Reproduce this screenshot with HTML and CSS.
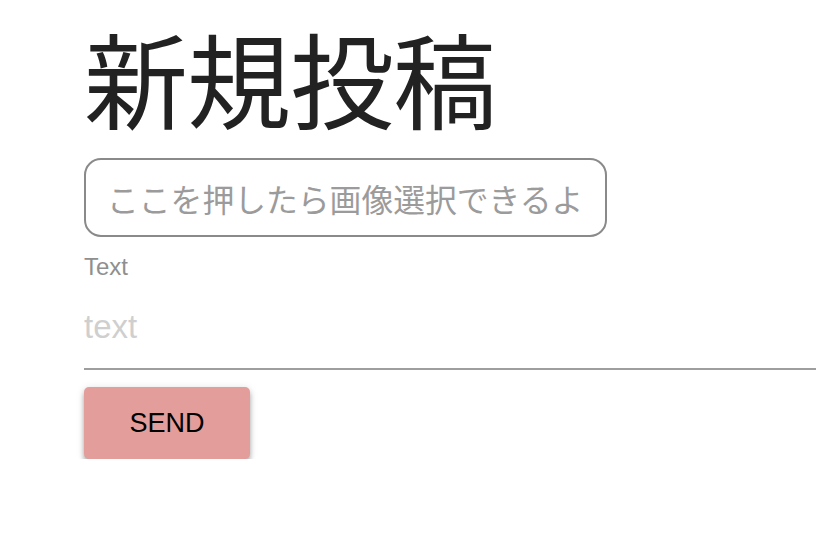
FILE: index.html
```html
<!DOCTYPE html>
<html lang="ja">
<head>
<meta charset="utf-8">
<title>新規投稿</title>
<link rel="stylesheet" href="styles.css">
</head>
<body>
<main class="page">
  <h1 class="title">新規投稿</h1>
  <label class="file-box">
    <span class="file-placeholder">ここを押したら画像選択できるよ</span>
  </label>
  <div class="field">
    <span class="field-label">Text</span>
    <input class="field-input" type="text" placeholder="text">
  </div>
  <button class="send" type="button">SEND</button>
</main>
</body>
</html>
```

FILE: styles.css
```css
html, body {
  margin: 0;
  padding: 0;
  background: #ffffff;
}

.page {
  padding: 0 0 0 84px;
  font-family: "Liberation Sans", Arial, "Noto Sans CJK JP", sans-serif;
}

.title {
  margin: 0;
  padding-top: 15px;
  font-family: "Noto Sans CJK JP", sans-serif;
  font-weight: 400;
  font-size: 104px;
  line-height: 124px;
  color: #222222;
  letter-spacing: -1px;
}

.file-box {
  display: flex;
  align-items: center;
  box-sizing: border-box;
  width: 523px;
  height: 79px;
  margin-top: 19px;
  padding-left: 21px;
  border: 2px solid #8a8a8a;
  border-radius: 17px;
  cursor: pointer;
}

.file-placeholder {
  font-family: "Noto Sans CJK JP", sans-serif;
  font-size: 31.8px;
  color: #9b9b9b;
  white-space: nowrap;
}

.field {
  display: flex;
  flex-direction: column;
  margin-top: 15px;
}

.field-label {
  font-size: 24px;
  line-height: 30px;
  color: #8f8f8f;
}

.field-input {
  box-sizing: border-box;
  width: 100%;
  height: 88px;
  margin: 0;
  padding: 4px 0 0 0;
  border: 0;
  border-bottom: 2px solid #9e9e9e;
  outline: none;
  font-family: "Liberation Sans", Arial, sans-serif;
  font-size: 33px;
  color: #222;
  background: transparent;
}

.field-input::placeholder {
  color: #cfcfcf;
}

.send {
  display: block;
  width: 166px;
  height: 72px;
  margin-top: 17px;
  border: 0;
  border-radius: 5px;
  background: #e39e9b;
  color: #000000;
  font-family: "Liberation Sans", Arial, sans-serif;
  font-size: 27px;
  box-shadow: 0 4px 5px rgba(0,0,0,0.28), 0 1px 9px rgba(0,0,0,0.12);
  cursor: pointer;
}
```
